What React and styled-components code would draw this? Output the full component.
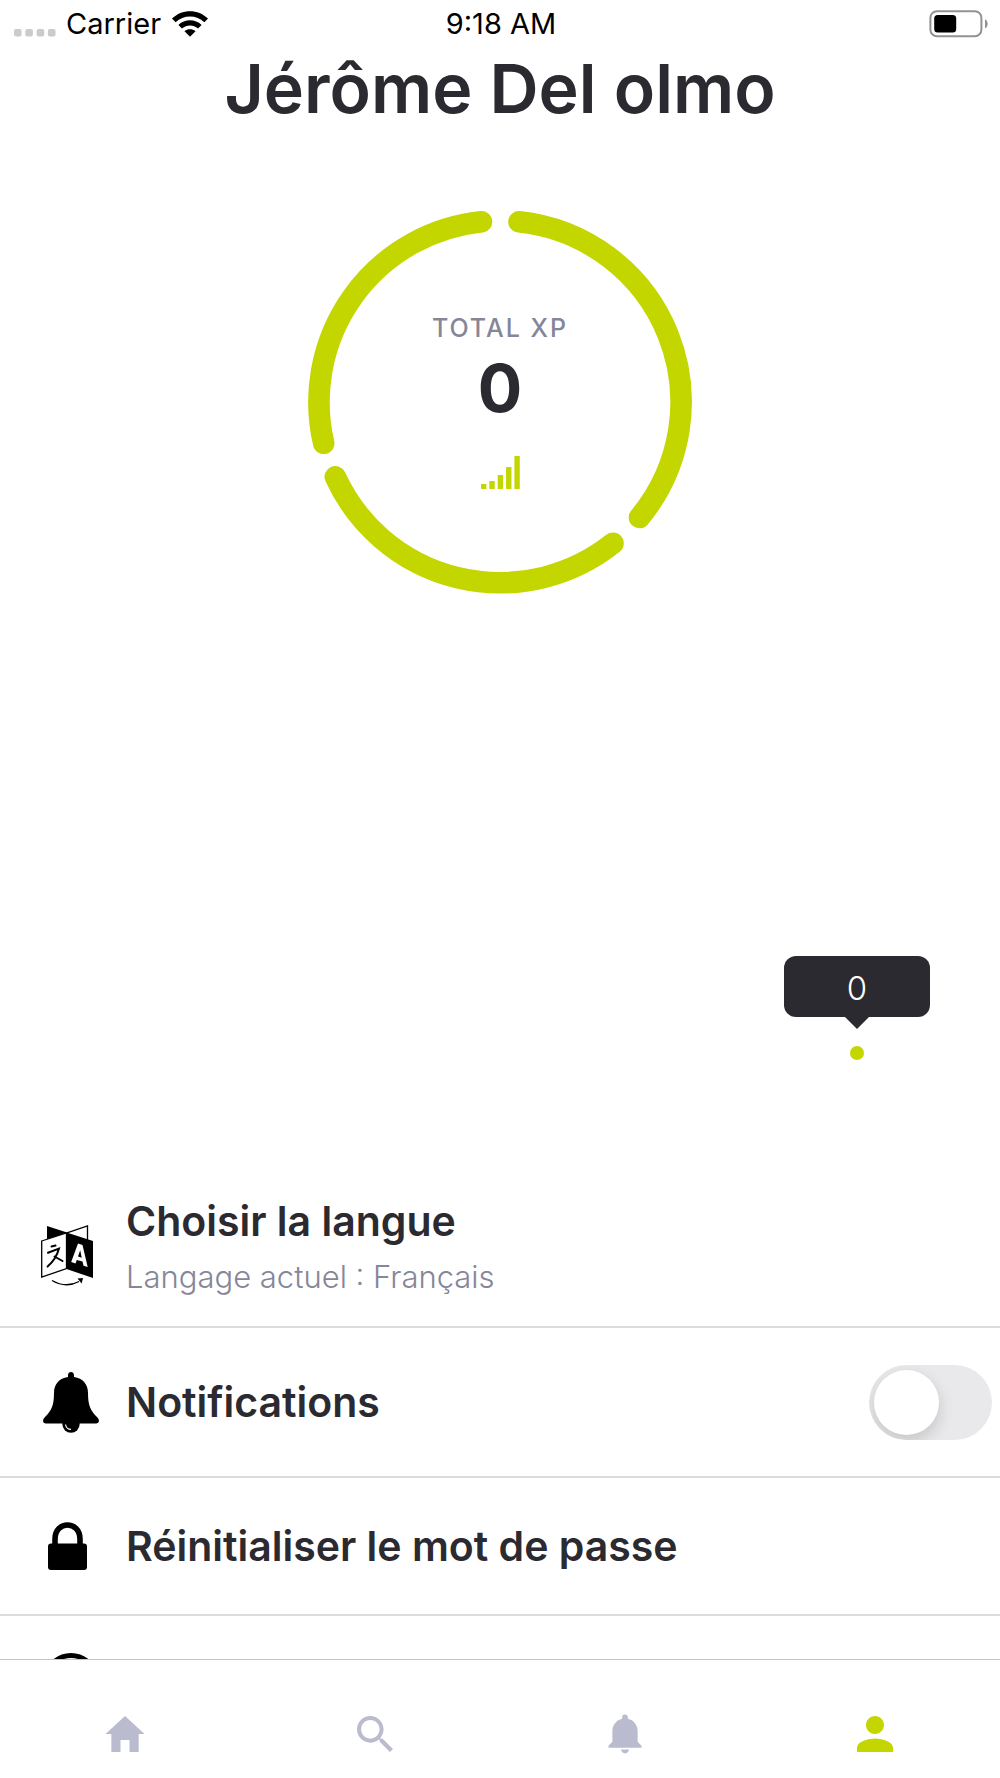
import React from "react";
import styled, { createGlobalStyle } from "styled-components";

const lime = "#c3d600";
const ink = "#2b2a30";
const muted = "#868699";
const idle = "#bbbbcf";

const GlobalStyle = createGlobalStyle`
  *, *::before, *::after { box-sizing: border-box; }
  body {
    margin: 0;
    background: #fff;
    color: ${ink};
    font-family: Inter, "Open Sans", sans-serif;
  }
`;

const Screen = styled.div`
  display: flex;
  flex-direction: column;
  height: 100vh;
  overflow: hidden;
`;

const StatusBar = styled.header`
  display: grid;
  grid-template-columns: 1fr auto 1fr;
  align-items: center;
  height: 48px;
  padding: 0 12px 0 14px;
  color: #000;
  font-size: 29px;
  line-height: 32px;
  flex-shrink: 0;
`;

const StatusGroup = styled.div`
  display: flex;
  align-items: center;
  justify-content: ${(p) => (p.$end ? "flex-end" : "flex-start")};
  gap: 10px;
`;

const Content = styled.main`
  flex: 1;
  min-height: 0;
  overflow: hidden;
`;

const Name = styled.h1`
  margin: 0;
  font-size: 68px;
  font-weight: 600;
  line-height: 80px;
  text-align: center;
`;

const Ring = styled.section`
  display: grid;
  place-items: center;
  margin-top: 82px;
  & > * { grid-area: 1 / 1; }
`;

const RingStats = styled.div`
  display: flex;
  flex-direction: column;
  align-items: center;
  padding-bottom: 4px;
`;

const StatLabel = styled.span`
  color: ${muted};
  font-size: 25px;
  font-weight: 500;
  letter-spacing: 2px;
  line-height: 32px;
`;

const StatValue = styled.strong`
  font-size: 66px;
  font-weight: 700;
  line-height: 88px;
  margin-bottom: 24px;
`;

const Chart = styled.section`
  display: flex;
  flex-direction: column;
  align-items: flex-end;
  height: 573px;
  padding: 362px 70px 0 0;
`;

const Marker = styled.div`
  display: flex;
  flex-direction: column;
  align-items: center;
`;

const Bubble = styled.output`
  width: 146px;
  padding-top: 3px;
  border-radius: 12px;
  background: ${ink};
  color: #fff;
  font-size: 33px;
  font-weight: 300;
  line-height: 58px;
  text-align: center;
`;

const Arrow = styled.span`
  border: 12px solid transparent;
  border-top-color: ${ink};
  border-bottom-width: 0;
`;

const Dot = styled.span`
  width: 14px;
  height: 14px;
  margin-top: 17px;
  border-radius: 50%;
  background: ${lime};
`;

const Settings = styled.ul`
  margin: 0;
  padding: 0;
  list-style: none;
`;

const Row = styled.li`
  display: flex;
  align-items: center;
  height: ${(p) => p.$height}px;
  padding-right: 8px;
  border-bottom: 2px solid #dcdcdc;
`;

const RowAction = styled.button`
  display: flex;
  align-items: center;
  width: 100%;
  padding: 0;
  border: 0;
  background: none;
  color: inherit;
  font: inherit;
  text-align: left;
`;

const RowIcon = styled.span`
  display: flex;
  justify-content: center;
  width: ${(p) => (p.$wide ? 142 : 134)}px;
  margin-right: ${(p) => (p.$wide ? -16 : -8)}px;
  padding-top: ${(p) => (p.$low ? 18 : 0)}px;
  flex-shrink: 0;
`;

const RowText = styled.span`
  display: flex;
  flex-direction: column;
  gap: 12px;
`;

const RowTitle = styled.span`
  font-size: 41px;
  font-weight: 600;
  line-height: 48px;
`;

const RowNote = styled.span`
  color: ${muted};
  font-size: 31px;
  font-weight: 300;
  line-height: 40px;
`;

const SwitchLabel = styled.label`
  display: flex;
  align-items: center;
  width: 100%;
`;

const Switch = styled.input`
  appearance: none;
  display: flex;
  align-items: center;
  width: 123px;
  height: 75px;
  margin: 0 0 0 auto;
  padding: 0 5px;
  border-radius: 38px;
  background: #e9e9eb;
  overflow: hidden;
  &::before {
    content: "";
    width: 65px;
    height: 65px;
    border-radius: 50%;
    background: #fff;
    box-shadow: 0 6px 16px rgba(0, 0, 0, 0.16);
  }
  &:checked { background: ${lime}; justify-content: flex-end; }
`;

const TabBar = styled.nav`
  display: grid;
  grid-template-columns: repeat(4, 1fr);
  height: 119px;
  padding-top: 50px;
  border-top: 1px solid #c4c4c6;
  background: #fff;
  flex-shrink: 0;
`;

const Tab = styled.a`
  display: flex;
  justify-content: center;
  color: ${(p) => (p.$active ? lime : idle)};
`;

const tabs = [
  { name: "Accueil", d: "M208 448V320h96v128h97.6V256H464L256 64 48 256h62.4v192z" },
  {
    name: "Recherche",
    d: "M337.509 305.372h-17.501l-6.571-5.486c20.791-25.232 33.922-57.054 33.922-93.257C347.358 127.632 283.896 64 205.135 64 127.452 64 64 127.632 64 206.629s63.452 142.628 142.225 142.628c35.011 0 67.831-13.167 92.991-34.008l6.561 5.487v17.551L415.18 448 448 415.086 337.509 305.372zm-131.284 0c-54.702 0-98.463-43.887-98.463-98.743 0-54.858 43.761-98.742 98.463-98.742 54.7 0 98.462 43.884 98.462 98.742 0 54.856-43.762 98.743-98.462 98.743z",
  },
  {
    name: "Notifications",
    d: "M256 464c22.779 0 41.411-18.719 41.411-41.6h-82.823c0 22.881 18.633 41.6 41.412 41.6zm134.589-124.8V224.8c0-63.44-44.516-117.518-103.53-131.041V79.2c0-17.682-13.457-31.2-31.059-31.2s-31.059 13.518-31.059 31.2v14.559c-59.015 13.523-103.53 67.601-103.53 131.041v114.4L80 380.8v20.8h352v-20.8l-41.411-41.6z",
  },
  {
    name: "Profil",
    active: true,
    d: "M256 256c52.805 0 96-43.201 96-96s-43.195-96-96-96-96 43.201-96 96 43.195 96 96 96zm0 48c-63.598 0-192 32.402-192 96v48h384v-48c0-63.598-128.402-96-192-96z",
  },
];

const Signal = () => (
  <svg width="42" height="26" viewBox="0 0 42 26" fill="#cbcbcb">
    {[0, 11.3, 22.6, 33.9].map((x) => (
      <rect key={x} x={x} y="18" width="7.6" height="7.4" rx="2" />
    ))}
  </svg>
);

const Wifi = () => (
  <svg width="38" height="28" viewBox="0 0 38 28">
    <path d="M1 8.6C11 -1.2 27 -1.2 37 8.6L33.4 12.2C25.4 4.6 12.6 4.6 4.6 12.2Z" />
    <path d="M7.4 15C14 8.8 24 8.8 30.6 15L27 18.5C22.4 14.4 15.6 14.4 11 18.5Z" />
    <path d="M13.5 21.2C16.6 18.6 21.4 18.6 24.5 21.2L19 26.8Z" />
  </svg>
);

const Battery = () => (
  <svg width="60" height="28" viewBox="0 0 60 28">
    <rect x="2.4" y="1.2" width="51" height="25" rx="6.5" fill="none" stroke="#929292" strokeWidth="2" />
    <rect x="6.2" y="5" width="22" height="17.6" rx="3.5" />
    <path d="M57 9.2C60.6 11 60.6 16.6 57 18.4Z" fill="#929292" />
  </svg>
);

const RingArcs = () => (
  <svg width="384" height="384" viewBox="0 0 384 384" fill="none" stroke={lime} strokeWidth="21.6" strokeLinecap="round">
    <path d="M211 11.8A181.2 181.2 0 0 1 331.5 307.5" />
    <path d="M305 333.3A181.2 181.2 0 0 1 27.3 266.8" />
    <path d="M15.7 233.3A181.2 181.2 0 0 1 173.5 11.8" />
  </svg>
);

const Bars = () => (
  <svg width="39" height="33" viewBox="0 0 39 33" fill={lime}>
    {[5, 8, 14, 22, 33].map((h, i) => (
      <rect key={h} x={i * 8.35} y={33 - h} width="5.4" height={h} rx="0.6" />
    ))}
  </svg>
);

const LanguageIcon = () => (
  <svg width="52" height="61" viewBox="0 0 52 61">
    <path d="M6 1L26 7.6 6 14.6Z" />
    <path d="M26 7.8L46.5 1V15" fill="none" stroke="#000" strokeWidth="1.3" />
    <path d="M.7 16L25.5 8V43.6L.7 52Z" fill="#fff" stroke="#000" strokeWidth="1.3" />
    <path d="M25.5 7.6L52 16V53L25.5 44Z" />
    <path d="M37 18.5L41.5 20 46.7 42 42.5 40.8 41.5 36.6 35.8 35 34.5 38.4 30.2 37ZM39.2 25.2L37 31.6 40.7 32.7Z" fill="#fff" fillRule="evenodd" />
    <path d="M10.5 21.5L14.5 20.6M7 27.8L18 23.6C16 31 12 37 6.6 41.6M13.5 31.5L21.5 36" fill="none" stroke="#000" strokeWidth="2" strokeLinecap="round" />
    <path d="M11 55.5Q25 63.5 38 56.5" fill="none" stroke="#000" strokeWidth="1.4" />
    <path d="M36.5 53.4L42 53 40.6 58.4Z" />
  </svg>
);

const BellIcon = () => (
  <svg width="56" height="61" viewBox="0 0 56 61">
    <path d="M25 5V3.2C25 -1 31 -1 31 3.2V5C40 6.5 45 12 45 21C45 34 48 39 53.5 44.5C57.5 48 56 51.6 53 51.6H3C0 51.6 -1.5 48 2.5 44.5C8 39 11 34 11 21C11 12 16 6.5 25 5Z" />
    <circle cx="28" cy="52" r="8.7" />
    <path d="M22.6 52.5A5.4 5.4 0 0 0 28 57.4" fill="none" stroke="#fff" strokeWidth="1.2" />
  </svg>
);

const LockIcon = () => (
  <svg width="39" height="48" viewBox="0 0 39 48">
    <path d="M7 24V17C7 -1.6 32 -1.6 32 17V24" fill="none" stroke="#000" strokeWidth="5.6" />
    <rect y="21.5" width="39" height="26.5" rx="3" />
  </svg>
);

const RoundIcon = () => (
  <svg width="56" height="56" viewBox="0 0 56 56" fill="none" stroke="#000" strokeWidth="5">
    <circle cx="28" cy="28" r="25.5" />
  </svg>
);

export default function App() {
  return (
    <Screen>
      <GlobalStyle />
      <StatusBar>
        <StatusGroup>
          <Signal />
          <span>Carrier</span>
          <Wifi />
        </StatusGroup>
        <time>9:18 AM</time>
        <StatusGroup $end>
          <Battery />
        </StatusGroup>
      </StatusBar>
      <Content>
        <Name>Jérôme Del olmo</Name>
        <Ring>
          <RingArcs />
          <RingStats>
            <StatLabel>TOTAL XP</StatLabel>
            <StatValue>0</StatValue>
            <Bars />
          </RingStats>
        </Ring>
        <Chart>
          <Marker>
            <Bubble>0</Bubble>
            <Arrow />
            <Dot />
          </Marker>
        </Chart>
        <Settings>
          <Row $height={161}>
            <RowAction type="button">
              <RowIcon $low><LanguageIcon /></RowIcon>
              <RowText>
                <RowTitle>Choisir la langue</RowTitle>
                <RowNote>Langage actuel : Français</RowNote>
              </RowText>
            </RowAction>
          </Row>
          <Row $height={150}>
            <SwitchLabel>
              <RowIcon $wide><BellIcon /></RowIcon>
              <RowTitle>Notifications</RowTitle>
              <Switch type="checkbox" role="switch" />
            </SwitchLabel>
          </Row>
          <Row $height={138}>
            <RowAction type="button">
              <RowIcon><LockIcon /></RowIcon>
              <RowTitle>Réinitialiser le mot de passe</RowTitle>
            </RowAction>
          </Row>
          <Row $height={132}>
            <RowIcon $wide><RoundIcon /></RowIcon>
          </Row>
        </Settings>
      </Content>
      <TabBar>
        {tabs.map((tab) => (
          <Tab key={tab.name} href="#" aria-label={tab.name} $active={tab.active}>
            <svg width="48" height="48" viewBox="0 0 512 512" fill="currentColor">
              <path d={tab.d} />
            </svg>
          </Tab>
        ))}
      </TabBar>
    </Screen>
  );
}
